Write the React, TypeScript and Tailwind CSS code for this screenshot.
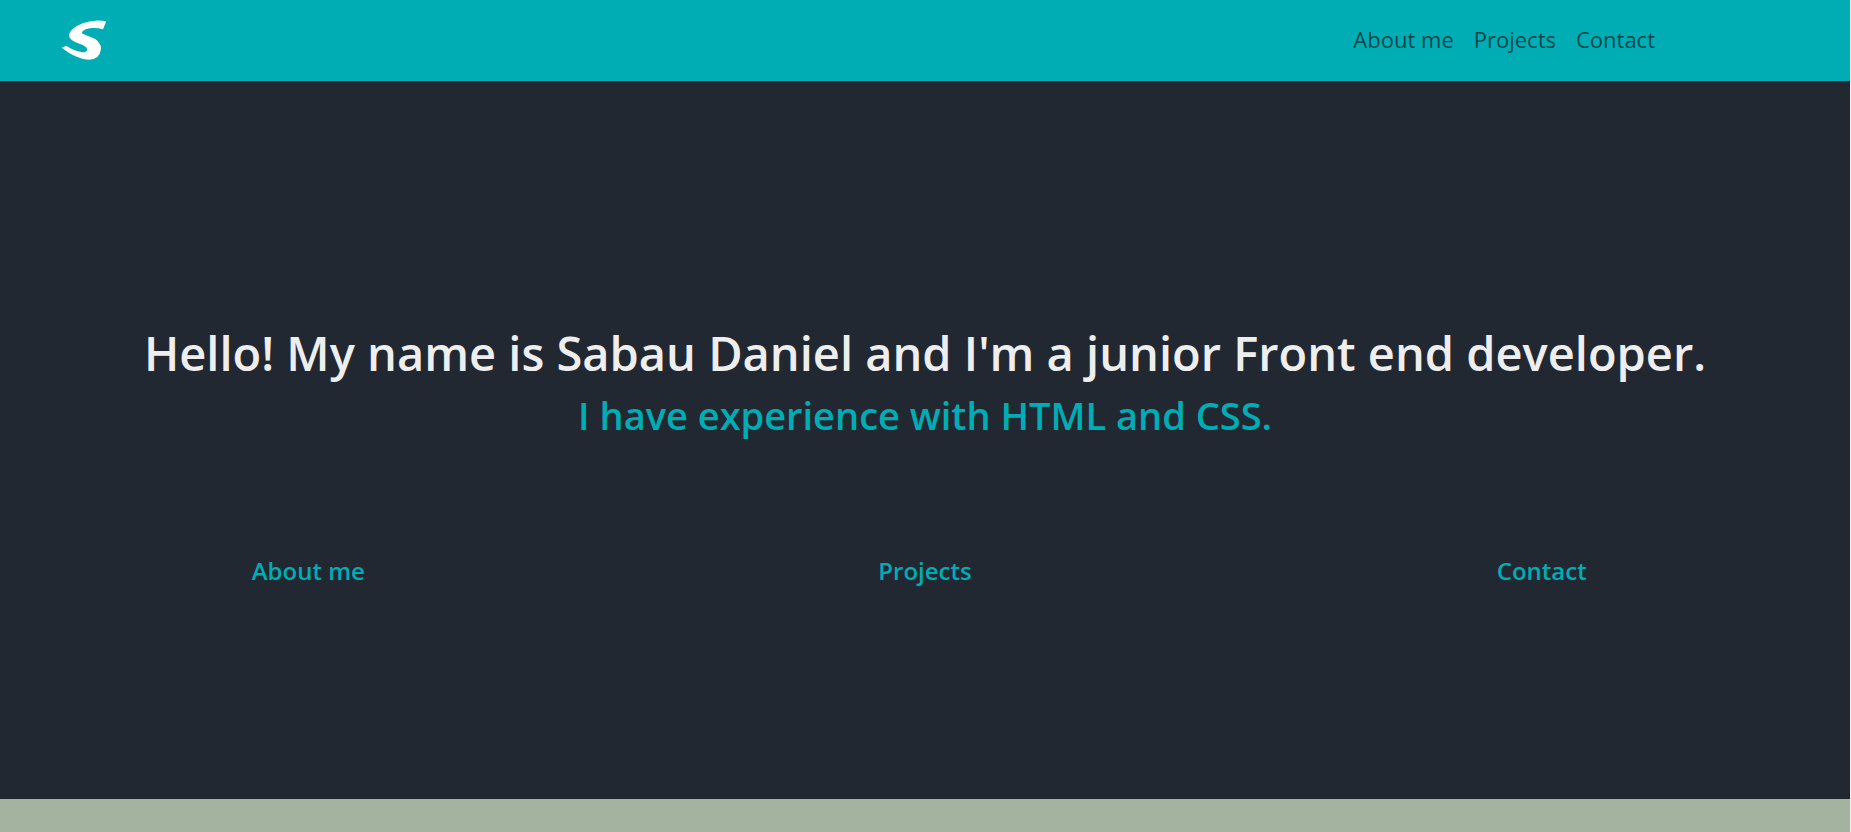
const links = [
  { label: 'About me', href: '#about' },
  { label: 'Projects', href: '#projects' },
  { label: 'Contact', href: '#contact' },
];

function Logo() {
  return (
    <svg viewBox="64 60 136 120" className="h-10 w-[46px]" fill="#fff" aria-hidden="true">
      <path d="M199 64 L189 88 Q160 80 137 88 Q125 94 126 99 Q128 103 150 110 Q184 121 183 147 Q179 179 146 179 Q108 177 65 143 L79 137 Q98 151 128 157 Q141 158 142 148 Q141 139 118 131 Q87 121 87 105 Q91 84 130 69 Q164 57 199 64 Z" />
    </svg>
  );
}

export default function App() {
  return (
    <div className="flex min-h-screen flex-col border-r border-[#f0f0f0] bg-[#a4b2a0] font-['Open_Sans','Noto_Sans',sans-serif]">
      <header className="flex min-h-[81px] items-center justify-between bg-[#00adb5] pr-[10%] pb-0.5 pl-[61px]">
        <a href="#home" aria-label="Home">
          <Logo />
        </a>
        <nav className="flex pb-0.5">
          {links.map((link) => (
            <a key={link.href} href={link.href} className="px-2.5 text-[22px] leading-10 text-black/60">
              {link.label}
            </a>
          ))}
        </nav>
      </header>
      <main className="min-h-[718px] bg-[#222831] pt-60 text-center font-semibold">
        <h1 className="text-[47px] leading-16 text-[#eeeeee]">
          Hello! My name is Sabau Daniel and I'm a junior Front end developer.
        </h1>
        <h2 className="mt-1.5 text-[38px] leading-12 text-[#00adb5]">I have experience with HTML and CSS.</h2>
        <div className="mt-29 grid grid-cols-3 text-2xl leading-8 text-[#00adb5]">
          {links.map((link) => (
            <div key={link.href}>
              <a href={link.href}>{link.label}</a>
            </div>
          ))}
        </div>
      </main>
    </div>
  );
}
